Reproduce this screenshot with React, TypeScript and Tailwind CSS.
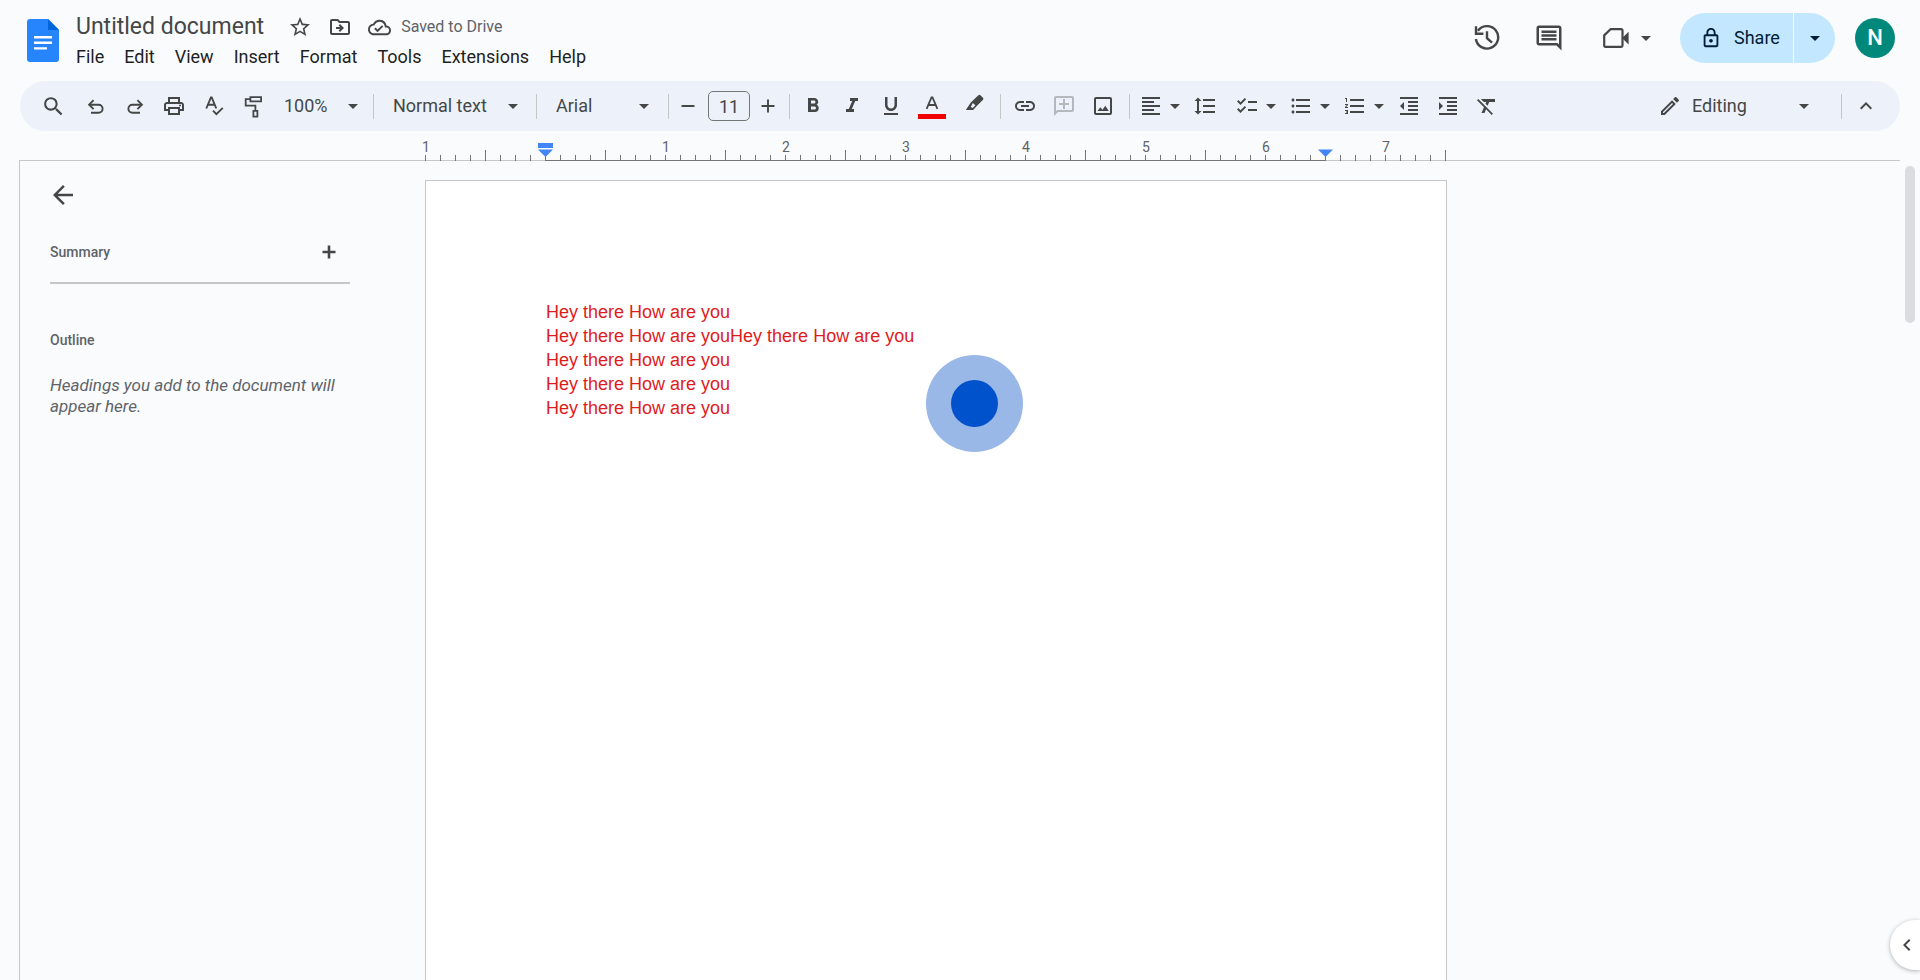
import React from "react";
import {
  MdArrowBack,
  MdArrowDropDown,
  MdChecklist,
  MdFormatAlignLeft,
  MdFormatBold,
  MdFormatClear,
  MdFormatIndentDecrease,
  MdFormatIndentIncrease,
  MdFormatItalic,
  MdFormatLineSpacing,
  MdFormatListBulleted,
  MdFormatListNumbered,
  MdFormatUnderlined,
  MdKeyboardArrowLeft,
  MdKeyboardArrowUp,
  MdLink,
  MdOutlineAddComment,
  MdOutlineCloudDone,
  MdOutlineComment,
  MdOutlineDriveFileMove,
  MdOutlineEdit,
  MdOutlineLock,
  MdOutlinePrint,
  MdSearch,
  MdStarBorder,
} from "react-icons/md";

const MENUS = ["File", "Edit", "View", "Insert", "Format", "Tools", "Extensions", "Help"];

const LINES = [
  "Hey there How are you",
  "Hey there How are youHey there How are you",
  "Hey there How are you",
  "Hey there How are you",
  "Hey there How are you",
];

const RULER_LABELS = ["1", "", "1", "2", "3", "4", "5", "6", "7"];
const TICKS = Array.from({ length: 69 }, (_, i) => i);

function Stroke({ children, size = 24, box = 24, width = 2 }: { children: React.ReactNode; size?: number; box?: number; width?: number }) {
  return (
    <svg width={size} height={size} viewBox={`0 0 ${box} ${box}`} fill="none" stroke="currentColor" strokeWidth={width} aria-hidden="true">
      {children}
    </svg>
  );
}

function DocsLogo() {
  return (
    <svg width="32" height="43" viewBox="0 0 32 43" aria-hidden="true">
      <path d="M3 0h18l11 11v29a3 3 0 0 1-3 3H3a3 3 0 0 1-3-3V3a3 3 0 0 1 3-3z" fill="#2684fc" />
      <path d="M21 0l11 11H21z" fill="#0066da" />
      <path d="M7 17h18v2.4H7zM7 22.6h18V25H7zM7 28.2h13v2.4H7z" fill="#fff" />
    </svg>
  );
}

function HistoryIcon() {
  return (
    <Stroke size={26} box={26} width={2.4}>
      <path d="M1.9 14a11.2 11.2 0 1 0 2-8.2" />
      <path d="M2 1.2v7.6h7.4" />
      <path d="M13 6.2v7l5 4.4" />
    </Stroke>
  );
}

function VideoIcon() {
  return (
    <svg width="26" height="22" viewBox="0 0 26 22" fill="none" aria-hidden="true">
      <path d="M7.5 2.2h10.8a1.2 1.2 0 0 1 1.2 1.2v15.2a1.2 1.2 0 0 1-1.2 1.2H2.4a1.2 1.2 0 0 1-1.2-1.2V8.4z" stroke="currentColor" strokeWidth="2.2" strokeLinejoin="round" />
      <path d="M20 10.2l5.6-5.4v12.6L20 12z" fill="currentColor" />
    </svg>
  );
}

function UndoIcon() {
  return (
    <Stroke width={1.9}>
      <path d="M5.4 10.7h9.2a4 4 0 0 1 0 8H7" />
      <path d="M9.6 6.2L5.1 10.7l4.5 4.5" />
    </Stroke>
  );
}

function RedoIcon() {
  return (
    <Stroke width={1.9}>
      <path d="M18.6 10.7H9.4a4 4 0 0 0 0 8H17" />
      <path d="M14.4 6.2l4.5 4.5-4.5 4.5" />
    </Stroke>
  );
}

function SpellIcon() {
  return (
    <Stroke width={1.9}>
      <path d="M4.3 14.500L8.900 3.400h.8L14.300 14.500M6 10.800h6.600" />
      <path d="M11 16.600l3.400 3.600 6.400-6.300" />
    </Stroke>
  );
}

function PaintIcon() {
  return (
    <Stroke width={1.8}>
      <path d="M9.4 3.2h10.700v4.200H9.400zM9.400 5.200H4.700v6.500h9.700v5.200M12.400 16.900h4v5.800h-4z" />
    </Stroke>
  );
}

function HighlighterIcon() {
  return (
    <svg width="24" height="24" viewBox="0 0 24 24" fill="currentColor" fillRule="evenodd" aria-hidden="true">
      <path d="M3.800 15.900L8.800 8.400 16.400 1.200q1-.9 2 0l2.600 2.600q.9 1 0 2L13.800 13L11.200 15.900zM10.800 8.900l-2 4.200 2 1 2.600-2.800z" />
    </svg>
  );
}

function TextColorIcon() {
  return (
    <svg width="28" height="26" viewBox="0 0 28 26" fill="none" aria-hidden="true">
      <path d="M8.600 15.800L13.500 4.400h1L19.400 15.800M10.200 12h7.600" stroke="currentColor" strokeWidth="1.800" />
      <path d="M0 21h28v5H0z" fill="#f00000" />
    </svg>
  );
}

function ImageIcon() {
  return (
    <svg width="24" height="24" viewBox="0 0 24 24" fill="none" aria-hidden="true">
      <rect x="4" y="4" width="16" height="16" rx="1" stroke="currentColor" strokeWidth="2" />
      <path d="M6.500 17l2.800-3.800 2.200 2.500 2.800-4 3.500 5.300z" fill="currentColor" />
    </svg>
  );
}

function ToolButton({ label, className = "w-[39px]", children }: { label: string; className?: string; children: React.ReactNode }) {
  return (
    <button type="button" aria-label={label} className={`flex h-9 shrink-0 items-center justify-center ${className}`}>
      {children}
    </button>
  );
}

function SplitButton({ label, className = "", children }: { label: string; className?: string; children: React.ReactNode }) {
  return (
    <div className={`flex shrink-0 ${className}`}>
      <ToolButton label={label} className="w-[30px]">
        {children}
      </ToolButton>
      <ToolButton label={`${label} options`} className="w-[18px]">
        <MdArrowDropDown size={24} className="shrink-0" />
      </ToolButton>
    </div>
  );
}

function ToolSelect({ label, value, className, arrow }: { label: string; value: string; className: string; arrow: string }) {
  return (
    <div className={`grid shrink-0 items-center ${className}`}>
      <select aria-label={label} defaultValue={value} className="col-start-1 row-start-1 h-9 w-full appearance-none bg-transparent text-lg leading-6">
        <option>{value}</option>
      </select>
      <MdArrowDropDown size={24} className={`pointer-events-none col-start-1 row-start-1 justify-self-end ${arrow}`} />
    </div>
  );
}

function Divider({ className = "" }: { className?: string }) {
  return <div className={`h-[25px] w-px shrink-0 bg-[#c4c7c5] ${className}`} />;
}

function Header() {
  return (
    <header className="flex h-[81px] shrink-0 justify-between pr-[25px] pl-[27px]">
      <div className="flex gap-[17px]">
        <a href="#home" aria-label="Docs home" className="mt-[19px] h-[43px]">
          <DocsLogo />
        </a>
        <div className="mt-[13px]">
          <div className="flex h-7 items-center text-[#444746]">
            <h1 className="text-[23px] leading-7 whitespace-nowrap">Untitled document</h1>
            <button type="button" aria-label="Star" className="ml-6 flex">
              <MdStarBorder size={24} />
            </button>
            <button type="button" aria-label="Move" className="ml-4 flex">
              <MdOutlineDriveFileMove size={24} />
            </button>
            <button type="button" className="ml-4 flex items-center gap-2.5 whitespace-nowrap text-[#5f6368]">
              <MdOutlineCloudDone size={23} className="text-[#444746]" />
              Saved to Drive
            </button>
          </div>
          <nav className="mt-0.5 flex h-7 items-center gap-5 text-lg leading-6 text-[#1f1f1f]">
            {MENUS.map((m) => (
              <button key={m} type="button">
                {m}
              </button>
            ))}
          </nav>
        </div>
      </div>
      <div className="mt-3 flex h-[52px] items-center self-start text-[#444746]">
        <button type="button" aria-label="Version history" className="flex w-[26px] justify-center">
          <HistoryIcon />
        </button>
        <button type="button" aria-label="Comments" className="ml-[34px] flex">
          <MdOutlineComment size={30} />
        </button>
        <button type="button" aria-label="Join a call" className="ml-[39px] flex items-center gap-[5px]">
          <VideoIcon />
          <MdArrowDropDown size={24} />
        </button>
        <div className="ml-[22px] flex h-[50px] overflow-hidden rounded-full bg-[#c2e7ff] text-[#001d35]">
          <button type="button" className="flex w-[113px] items-center gap-3 pl-5 text-lg leading-6">
            <MdOutlineLock size={22} />
            Share
          </button>
          <button type="button" aria-label="Sharing options" className="flex w-[42px] items-center justify-center border-l border-white">
            <MdArrowDropDown size={24} />
          </button>
        </div>
        <button type="button" aria-label="Account" className="ml-5 h-10 w-10 rounded-full bg-[#00897b] text-[22px] leading-10 font-medium text-white">
          N
        </button>
      </div>
    </header>
  );
}

function Toolbar() {
  return (
    <div role="toolbar" className="mx-5 flex h-[50px] shrink-0 items-center overflow-hidden rounded-full bg-[#edf2fa] pr-[15px] pl-3.5 text-[#444746]">
      <ToolButton label="Search the menus">
        <MdSearch size={25} />
      </ToolButton>
      <ToolButton label="Undo" className="ml-[3px] w-[39px]">
        <UndoIcon />
      </ToolButton>
      <ToolButton label="Redo">
        <RedoIcon />
      </ToolButton>
      <ToolButton label="Print" className="w-10">
        <MdOutlinePrint size={24} />
      </ToolButton>
      <ToolButton label="Spelling and grammar check">
        <SpellIcon />
      </ToolButton>
      <ToolButton label="Paint format">
        <PaintIcon />
      </ToolButton>
      <ToolSelect label="Zoom" value="100%" className="w-[101px] pl-3" arrow="mr-2" />
      <Divider />
      <ToolSelect label="Styles" value="Normal text" className="w-[162px] pl-[19px]" arrow="mr-[11px]" />
      <Divider />
      <ToolSelect label="Font" value="Arial" className="w-[131px] pl-[19px]" arrow="mr-3" />
      <Divider />
      <ToolButton label="Decrease font size" className="mr-px w-[38px]">
        <Stroke width={1.9}>
          <path d="M5.500 12h13" />
        </Stroke>
      </ToolButton>
      <input aria-label="Font size" defaultValue="11" className="h-[30px] w-[42px] shrink-0 rounded-[5px] border border-[#747775] text-center text-lg leading-6" />
      <ToolButton label="Increase font size" className="w-[35px]">
        <Stroke width={1.9}>
          <path d="M5.500 12h13M12 5.500v13" />
        </Stroke>
      </ToolButton>
      <Divider className="mr-[3px] ml-1" />
      <ToolButton label="Bold">
        <MdFormatBold size={24} />
      </ToolButton>
      <ToolButton label="Italic">
        <MdFormatItalic size={24} />
      </ToolButton>
      <ToolButton label="Underline" className="w-10">
        <MdFormatUnderlined size={24} />
      </ToolButton>
      <ToolButton label="Text color" className="w-[42px]">
        <TextColorIcon />
      </ToolButton>
      <ToolButton label="Highlight color" className="w-[42px]">
        <HighlighterIcon />
      </ToolButton>
      <Divider className="mr-1 ml-[5px]" />
      <ToolButton label="Insert link">
        <MdLink size={24} />
      </ToolButton>
      <ToolButton label="Add comment" className="w-[39px] text-[#b4b8bd]">
        <MdOutlineAddComment size={24} className="-scale-x-100" />
      </ToolButton>
      <ToolButton label="Insert image">
        <ImageIcon />
      </ToolButton>
      <Divider className="mr-1.5 ml-[7px]" />
      <SplitButton label="Align">
        <MdFormatAlignLeft size={24} />
      </SplitButton>
      <ToolButton label="Line spacing" className="ml-px w-[39px]">
        <MdFormatLineSpacing size={24} />
      </ToolButton>
      <SplitButton label="Checklist" className="ml-2">
        <MdChecklist size={24} />
      </SplitButton>
      <SplitButton label="Bulleted list" className="ml-1.5">
        <MdFormatListBulleted size={24} />
      </SplitButton>
      <SplitButton label="Numbered list" className="ml-1.5">
        <MdFormatListNumbered size={24} />
      </SplitButton>
      <ToolButton label="Decrease indent" className="ml-px w-[39px]">
        <MdFormatIndentDecrease size={24} />
      </ToolButton>
      <ToolButton label="Increase indent">
        <MdFormatIndentIncrease size={24} />
      </ToolButton>
      <ToolButton label="Clear formatting" className="w-10">
        <MdFormatClear size={24} />
      </ToolButton>
      <div className="ml-auto flex items-center">
        <MdOutlineEdit size={24} />
        <ToolSelect label="Mode" value="Editing" className="w-[159px] pl-2.5" arrow="mr-[25px]" />
        <Divider className="mr-1" />
        <ToolButton label="Hide the menus">
          <MdKeyboardArrowUp size={24} />
        </ToolButton>
      </div>
    </div>
  );
}

function IndentMarker({ bar }: { bar: boolean }) {
  return (
    <svg width="15" height="14" viewBox="0 0 15 14" fill="#4285f4" aria-hidden="true">
      {bar && <path d="M0 0h15v5H0z" />}
      <path d="M0 6.500h15L7.500 14z" />
    </svg>
  );
}

function Ruler() {
  return (
    <div className="relative z-10 -mb-px ml-[365px] grid h-[30px] w-[1110px] shrink-0 text-[#5f6368]">
      <div className="col-start-1 row-start-1 flex pt-2 pl-px">
        {RULER_LABELS.map((l, i) => (
          <span key={i} className="w-[120px] text-center text-sm leading-4">
            {l}
          </span>
        ))}
      </div>
      <div className="col-start-1 row-start-1 flex items-end self-end pl-[60px]">
        {TICKS.map((t) => (
          <span
            key={t}
            className={`w-[15px] shrink-0 border-l border-[#747775] ${t % 8 === 4 ? "h-[11px]" : "h-1.5"} ${t >= 8 && t < 60 ? "border-b" : ""}`}
          />
        ))}
      </div>
      <div className="col-start-1 row-start-1 ml-[173px] flex w-[795px] justify-between pt-3">
        <IndentMarker bar />
        <IndentMarker bar={false} />
      </div>
    </div>
  );
}

function Sidebar() {
  return (
    <aside className="w-[405px] shrink-0 pr-[75px] pl-[30px] text-[#5f6368]">
      <button type="button" aria-label="Close outline" className="mt-[19px] -ml-0.5 flex text-[#444746]">
        <MdArrowBack size={30} />
      </button>
      <div className="mt-3 flex h-[62px] items-center justify-between border-b-2 border-[#c4c7c5] pr-[9px]">
        <h2 className="text-sm leading-5 font-medium">Summary</h2>
        <button type="button" aria-label="Add summary" className="flex text-[#444746]">
          <Stroke width={2.6}>
            <path d="M5.500 12h13M12 5.500v13" />
          </Stroke>
        </button>
      </div>
      <h2 className="mt-[46px] text-sm leading-5 font-medium">Outline</h2>
      <p className="mt-[25px] text-[17px] leading-[21px] italic">Headings you add to the document will appear here.</p>
    </aside>
  );
}

export default function App() {
  return (
    <div className="relative flex h-screen flex-col overflow-hidden bg-[#f9fbfd] font-['Roboto',sans-serif]">
      <Header />
      <Toolbar />
      <Ruler />
      <div className="flex min-h-0 flex-1">
        <div className="ml-[19px] flex min-w-0 flex-1 overflow-hidden border-t border-l border-[#c4c7c5]">
          <Sidebar />
          <main className="relative mt-[19px] w-[1022px] shrink-0 border border-b-0 border-[#c4c7c5] bg-white px-[120px] pt-[119px] font-['Liberation_Sans',sans-serif] text-lg leading-6 text-[#e01b1b]">
            {LINES.map((line, i) => (
              <p key={i}>{line}</p>
            ))}
            <div className="absolute top-[174px] left-[500px] flex h-[97px] w-[97px] items-center justify-center rounded-full bg-[#99b8e8]">
              <div className="h-[47px] w-[47px] rounded-full bg-[#0052cc]" />
            </div>
          </main>
        </div>
        <div className="w-5 shrink-0 pt-1.5 pl-[5px]">
          <div className="h-[157px] w-2.5 rounded-full bg-[#dadce0]" />
        </div>
      </div>
      <button type="button" aria-label="Show side panel" className="absolute right-0 bottom-2.5 flex h-[50px] w-[30px] items-center justify-center rounded-l-full bg-white pl-1 text-[#444746] shadow-[0_1px_4px_rgba(60,64,67,0.4)]">
        <MdKeyboardArrowLeft size={24} className="shrink-0" />
      </button>
    </div>
  );
}
